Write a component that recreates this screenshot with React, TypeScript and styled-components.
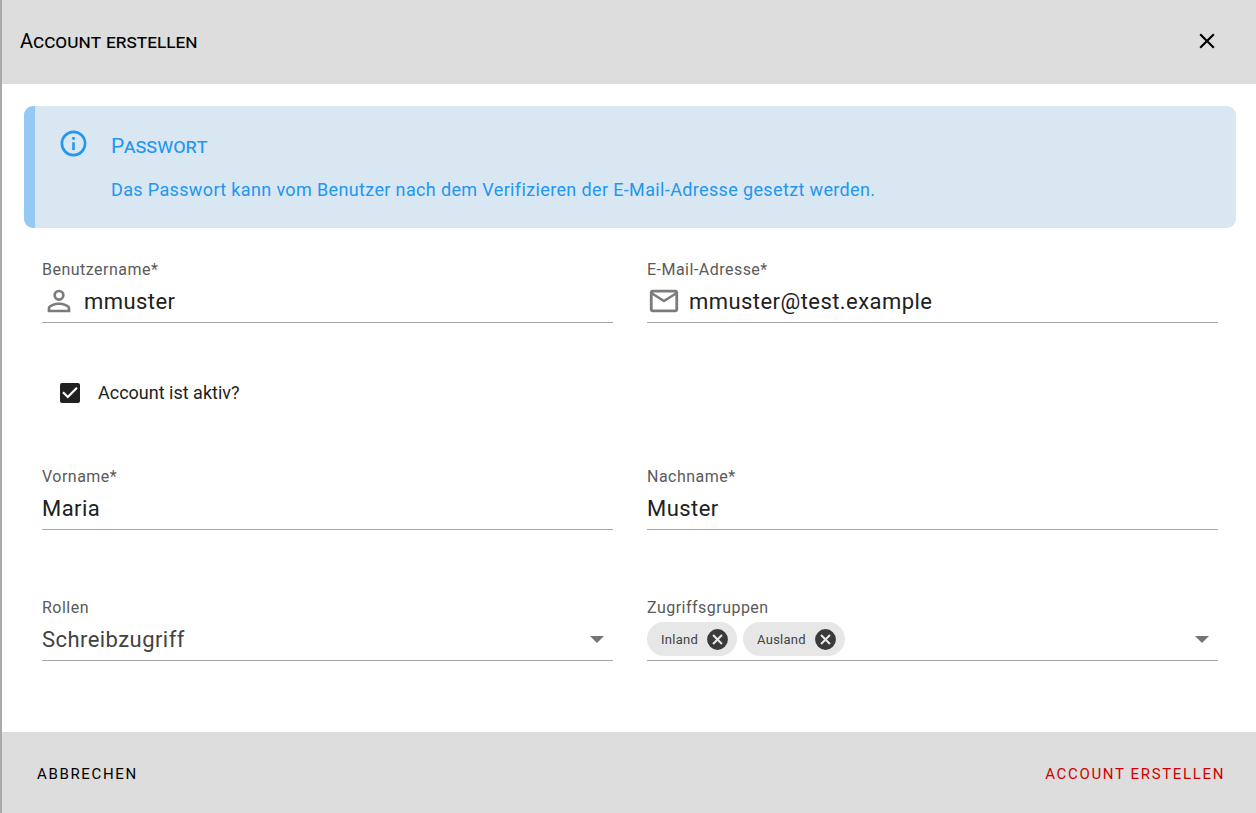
import React, { useState } from "react";
import type { ReactNode } from "react";
import styled, { createGlobalStyle } from "styled-components";

const GlobalStyle = createGlobalStyle`
  *, *::before, *::after { box-sizing: border-box; }
  body {
    margin: 0;
    background: #fff;
    color: #212121;
    font-family: Roboto, "Liberation Sans", sans-serif;
  }
  button, input, select { font: inherit; letter-spacing: inherit; color: inherit; }
`;

const Dialog = styled.form`
  display: flex;
  flex-direction: column;
  min-height: 100vh;
  border-left: 2px solid #aaa;
`;

const Header = styled.header`
  display: flex;
  align-items: center;
  justify-content: space-between;
  height: 84px;
  padding: 0 32px 2px 18px;
  background: #ddd;
  color: #000;
`;

const Title = styled.h1`
  margin: 0;
  font-size: 20px;
  line-height: 24px;
  font-weight: 400;
  font-variant: small-caps;
`;

const IconButton = styled.button<{ $size: number }>`
  display: flex;
  align-items: center;
  justify-content: center;
  width: ${(p) => p.$size}px;
  height: ${(p) => p.$size}px;
  padding: 0;
  border: 0;
  background: none;
  cursor: pointer;
`;

const Icon = styled.svg<{ $size: number; $color?: string }>`
  display: block;
  flex: none;
  width: ${(p) => p.$size}px;
  height: ${(p) => p.$size}px;
  fill: ${(p) => p.$color ?? "currentColor"};
`;

const Content = styled.main`
  flex: 1;
  padding: 22px 20px 70px 22px;
`;

const Notice = styled.section`
  display: flex;
  gap: 22px;
  min-height: 122px;
  padding: 22px 24px 24px 23px;
  border-left: 11px solid #94c9f3;
  border-radius: 9px;
  background: #d9e7f2;
  color: #2196f3;
`;

const NoticeTitle = styled.h2`
  margin: 4px 0 16px;
  font-size: 21px;
  line-height: 28px;
  font-weight: 400;
  font-variant: small-caps;
`;

const NoticeText = styled.p`
  margin: 0;
  font-size: 18px;
  line-height: 28px;
  letter-spacing: 0.02em;
`;

const Fields = styled.div`
  display: grid;
  grid-template-columns: 1fr 1fr;
  column-gap: 34px;
  padding: 32px 18px 0;
`;

const FieldBox = styled.div<{ $after: number }>`
  margin-bottom: ${(p) => p.$after}px;
`;

const Label = styled.label`
  display: block;
  font-size: 16px;
  line-height: 20px;
  letter-spacing: 0.03em;
  color: #5a5a5a;
`;

const Control = styled.div`
  display: flex;
  align-items: center;
  gap: 8px;
  height: 43px;
  border-bottom: 1px solid #a6a6a6;
`;

const TextInput = styled.input`
  flex: 1;
  min-width: 0;
  height: 32px;
  padding: 0;
  border: 0;
  outline: 0;
  background: none;
  font-size: 22px;
  letter-spacing: 0.02em;
`;

const Select = styled.select`
  flex: 1;
  min-width: 0;
  height: 32px;
  padding: 0;
  border: 0;
  outline: 0;
  background: none;
  appearance: none;
  font-size: 22px;
  letter-spacing: 0.02em;
  color: #424242;
`;

const Arrow = styled.span`
  width: 0;
  margin-right: 9px;
  border: 7px solid transparent;
  border-top-color: #757575;
  border-bottom-width: 0;
  pointer-events: none;
`;

const CheckRow = styled.label`
  grid-column: 1 / -1;
  display: flex;
  align-items: center;
  gap: 18px;
  padding-left: 18px;
  margin-bottom: 62px;
  font-size: 18px;
  line-height: 24px;
`;

const CheckBox = styled.input`
  appearance: none;
  width: 20px;
  height: 20px;
  margin: 0;
  border: 2px solid #212121;
  border-radius: 2px;
`;

const CheckMark = styled.span`
  display: grid;
  > * { grid-area: 1 / 1; }
  > svg { pointer-events: none; visibility: hidden; }
  > input:checked { background: #212121; }
  > input:checked + svg { visibility: visible; }
`;

const Chips = styled.div`
  display: flex;
  gap: 6px;
`;

const Chip = styled.span`
  display: flex;
  align-items: center;
  gap: 9px;
  height: 34px;
  padding: 0 9px 0 14px;
  border-radius: 17px;
  background: #e7e7e7;
  font-size: 13px;
  letter-spacing: 0.02em;
  color: #424242;
`;

const Footer = styled.footer`
  display: flex;
  align-items: center;
  justify-content: space-between;
  height: 81px;
  padding: 2px 20px 0;
  background: #ddd;
`;

const TextButton = styled.button<{ $primary?: boolean }>`
  height: 40px;
  padding: 0 11px 0 15px;
  border: 0;
  background: none;
  color: ${(p) => (p.$primary ? "#d00000" : "#000")};
  font-size: 15px;
  letter-spacing: 0.11em;
  text-transform: uppercase;
  cursor: pointer;
`;

type FieldProps = { id: string; label: string; after: number; children: ReactNode };

function Field({ id, label, after, children }: FieldProps) {
  return (
    <FieldBox $after={after}>
      <Label htmlFor={id}>{label}</Label>
      <Control>{children}</Control>
    </FieldBox>
  );
}

const PersonIcon = () => (
  <Icon $size={34} $color="#7b7b7b" viewBox="0 0 24 24" aria-hidden="true">
    <path d="M12 5.9a2.1 2.1 0 1 1 0 4.2 2.1 2.1 0 0 1 0-4.2m0 9c2.97 0 6.1 1.46 6.1 2.1v1.1H5.9V17c0-.64 3.13-2.1 6.1-2.1M12 4a4 4 0 1 0 0 8 4 4 0 0 0 0-8m0 9c-2.67 0-8 1.34-8 4v3h16v-3c0-2.66-5.33-4-8-4" />
  </Icon>
);

const MailIcon = () => (
  <Icon $size={34} $color="#7b7b7b" viewBox="0 0 24 24" aria-hidden="true">
    <path d="M22 6c0-1.1-.9-2-2-2H4c-1.1 0-2 .9-2 2v12c0 1.1.9 2 2 2h16c1.1 0 2-.9 2-2V6m-2 0-8 5-8-5h16m0 12H4V8l8 5 8-5v10" />
  </Icon>
);

const InfoIcon = () => (
  <Icon $size={31} viewBox="0 0 24 24" aria-hidden="true">
    <path d="M11 9h2V7h-2m1 13a8 8 0 1 1 0-16 8 8 0 0 1 0 16m0-18a10 10 0 1 0 0 20 10 10 0 0 0 0-20m-1 15h2v-6h-2v6" />
  </Icon>
);

const CloseIcon = () => (
  <Icon $size={26} viewBox="0 0 24 24" aria-hidden="true">
    <path d="M19 6.41 17.59 5 12 10.59 6.41 5 5 6.41 10.59 12 5 17.59 6.41 19 12 13.41 17.59 19 19 17.59 13.41 12z" />
  </Icon>
);

const RemoveIcon = () => (
  <Icon $size={25} $color="#3a3a3a" viewBox="0 0 24 24" aria-hidden="true">
    <path d="M12 2a10 10 0 1 0 0 20 10 10 0 0 0 0-20m5 13.59L15.59 17 12 13.41 8.41 17 7 15.59 10.59 12 7 8.41 8.41 7 12 10.59 15.59 7 17 8.41 13.41 12z" />
  </Icon>
);

export default function App() {
  const [groups, setGroups] = useState(["Inland", "Ausland"]);

  return (
    <>
      <GlobalStyle />
      <Dialog onSubmit={(e) => e.preventDefault()}>
        <Header>
          <Title>Account erstellen</Title>
          <IconButton type="button" $size={34} aria-label="Schließen">
            <CloseIcon />
          </IconButton>
        </Header>

        <Content>
          <Notice>
            <InfoIcon />
            <div>
              <NoticeTitle>Passwort</NoticeTitle>
              <NoticeText>
                Das Passwort kann vom Benutzer nach dem Verifizieren der E-Mail-Adresse gesetzt werden.
              </NoticeText>
            </div>
          </Notice>

          <Fields>
            <Field id="username" label="Benutzername*" after={58}>
              <PersonIcon />
              <TextInput id="username" defaultValue="mmuster" />
            </Field>
            <Field id="email" label="E-Mail-Adresse*" after={58}>
              <MailIcon />
              <TextInput id="email" type="email" defaultValue="mmuster@test.example" />
            </Field>

            <CheckRow>
              <CheckMark>
                <CheckBox type="checkbox" defaultChecked />
                <Icon $size={20} $color="#fff" viewBox="3 3 18 18" aria-hidden="true">
                  <path d="m10 17-5-5 1.41-1.42L10 14.17l7.59-7.59L19 8" />
                </Icon>
              </CheckMark>
              Account ist aktiv?
            </CheckRow>

            <Field id="firstname" label="Vorname*" after={68}>
              <TextInput id="firstname" defaultValue="Maria" />
            </Field>
            <Field id="lastname" label="Nachname*" after={68}>
              <TextInput id="lastname" defaultValue="Muster" />
            </Field>

            <Field id="roles" label="Rollen" after={0}>
              <Select id="roles" defaultValue="write">
                <option value="write">Schreibzugriff</option>
                <option value="read">Lesezugriff</option>
              </Select>
              <Arrow />
            </Field>
            <Field id="groups" label="Zugriffsgruppen" after={0}>
              <Chips>
                {groups.map((name) => (
                  <Chip key={name}>
                    {name}
                    <IconButton
                      type="button"
                      $size={21}
                      aria-label={`${name} entfernen`}
                      onClick={() => setGroups(groups.filter((g) => g !== name))}
                    >
                      <RemoveIcon />
                    </IconButton>
                  </Chip>
                ))}
              </Chips>
              <Select
                id="groups"
                value=""
                onChange={(e) => setGroups([...new Set([...groups, e.target.value])])}
              >
                <option value="" />
                <option value="Inland">Inland</option>
                <option value="Ausland">Ausland</option>
              </Select>
              <Arrow />
            </Field>
          </Fields>
        </Content>

        <Footer>
          <TextButton type="button">Abbrechen</TextButton>
          <TextButton type="submit" $primary>
            Account erstellen
          </TextButton>
        </Footer>
      </Dialog>
    </>
  );
}
